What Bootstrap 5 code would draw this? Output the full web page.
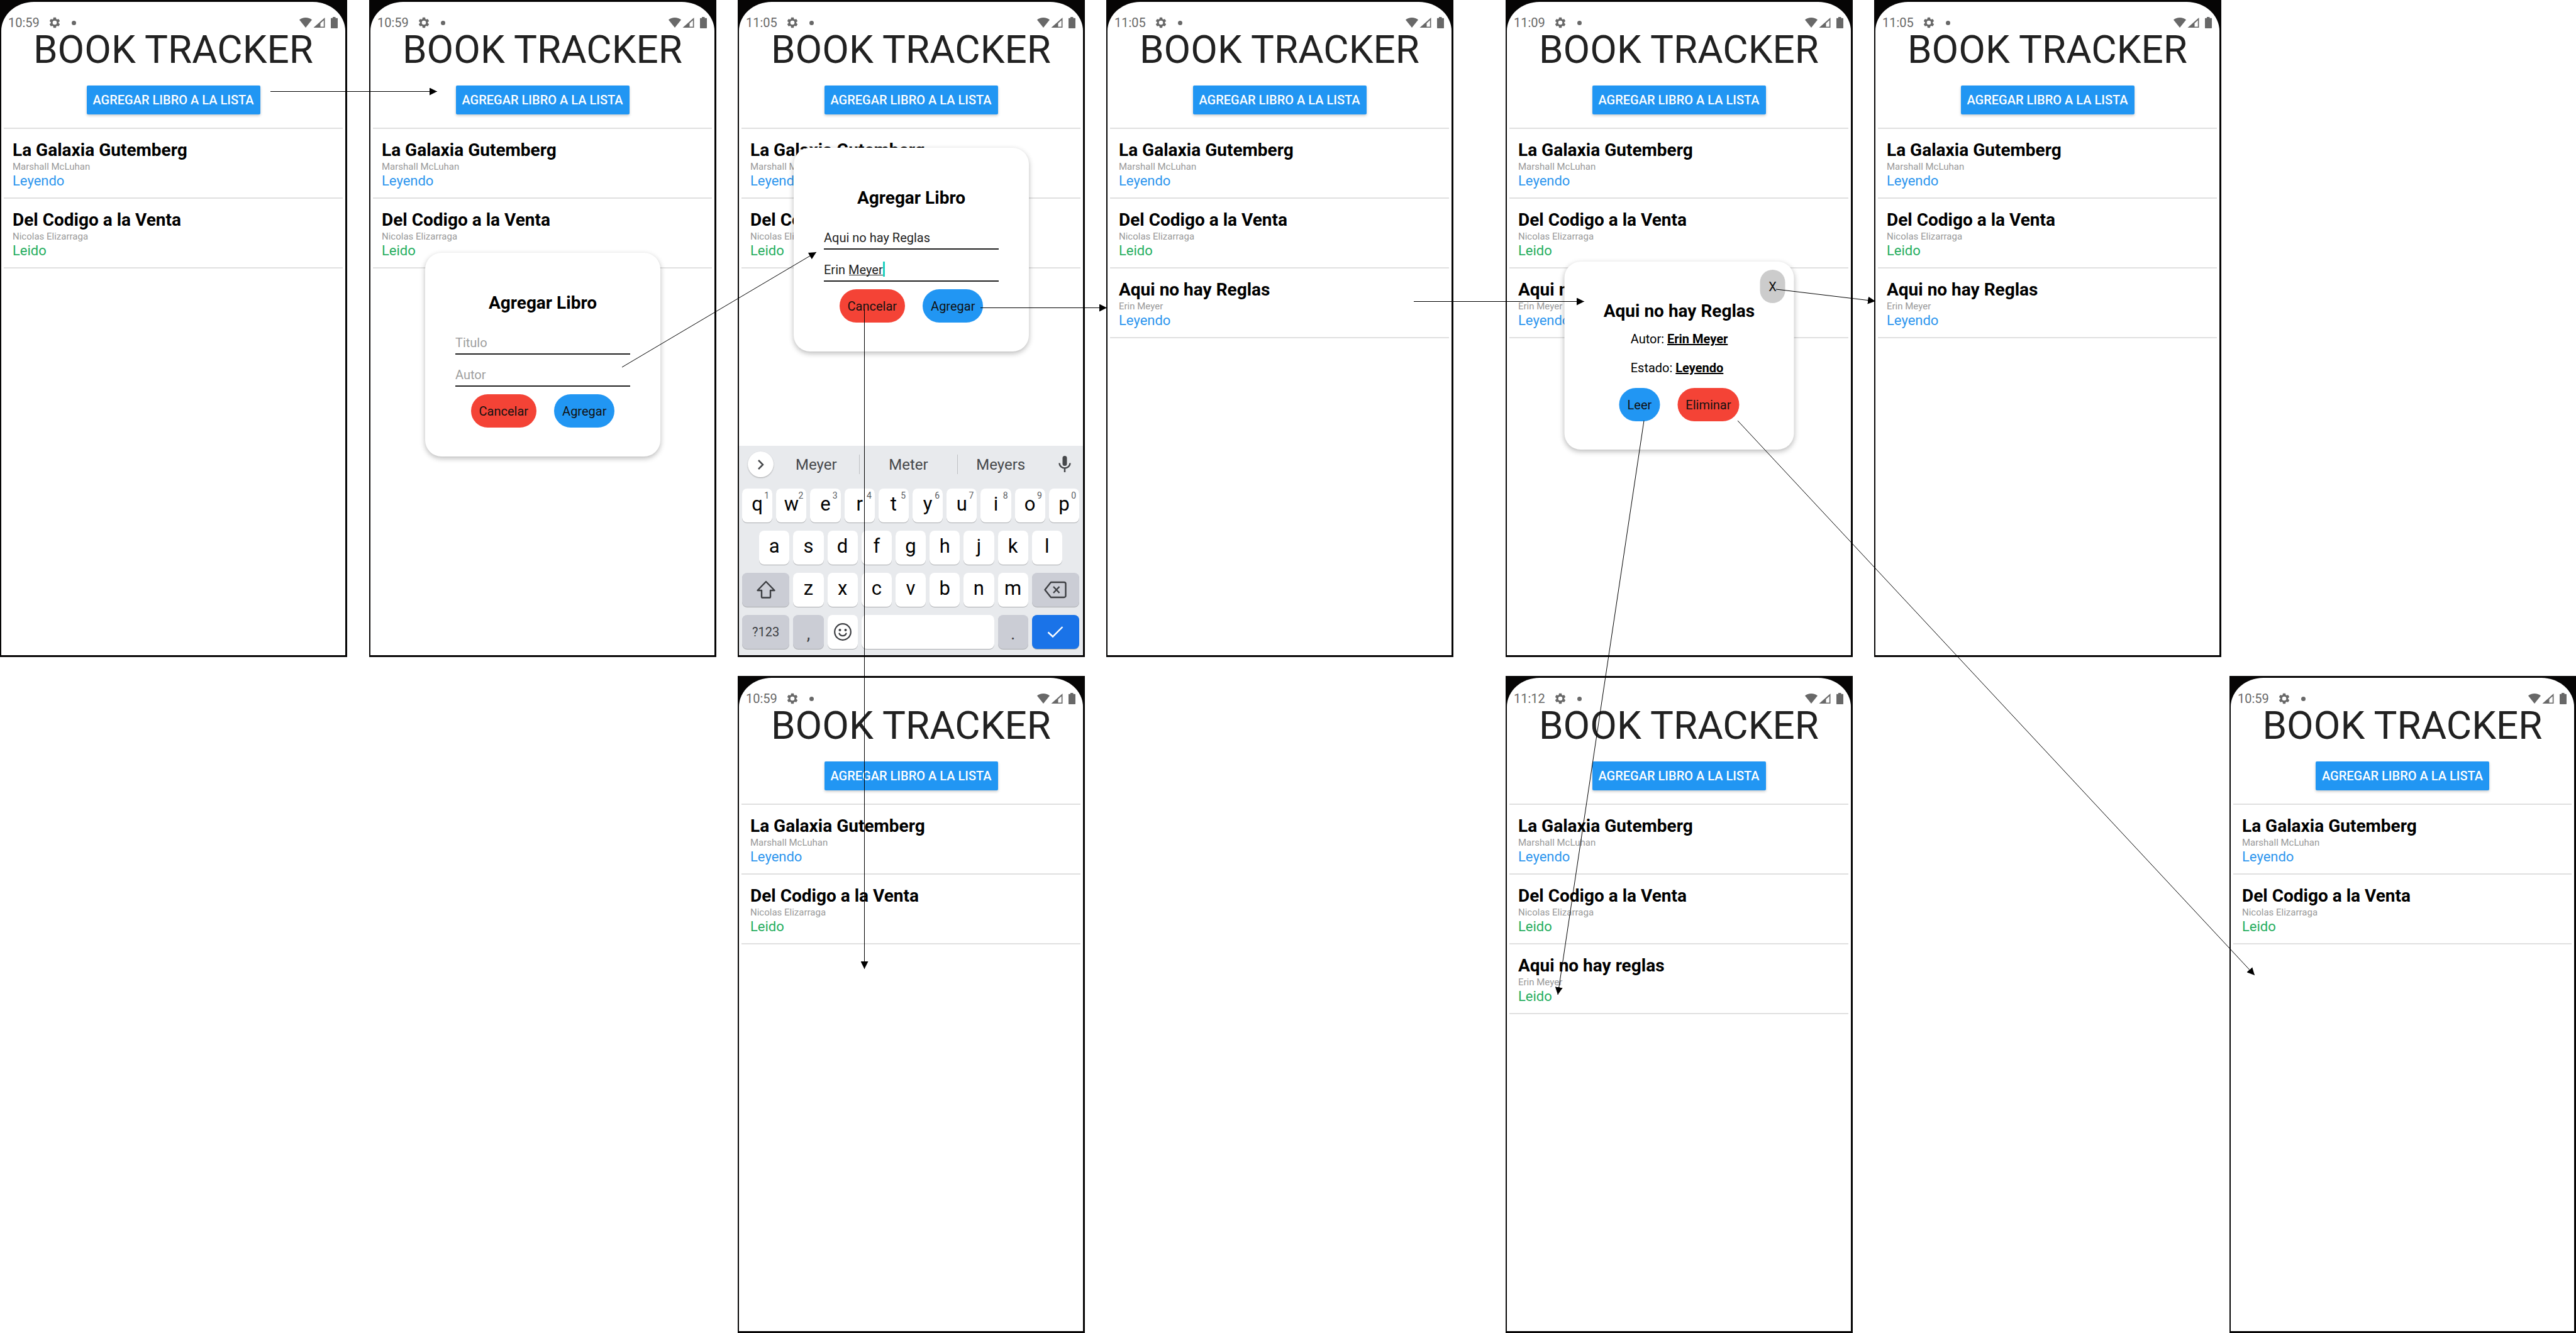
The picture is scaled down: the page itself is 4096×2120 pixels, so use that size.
<!DOCTYPE html>
<html lang="es">
<head>
<meta charset="utf-8">
<meta name="viewport" content="width=device-width, initial-scale=1">
<title>Book Tracker</title>
<link href="https://cdn.jsdelivr.net/npm/bootstrap@5.3.0/dist/css/bootstrap.min.css" rel="stylesheet">
<style>
  body { font-family: Roboto, "Liberation Sans", sans-serif; background: #fff; color: #000; }
  svg { display: block; flex: none; }

  /* board: seven phone columns with connector gutters between them */
  .board {
    display: grid;
    grid-template-columns: 552fr 35fr 552fr 34fr 552fr 34fr 552fr 83fr 552fr 34fr 552fr 13fr 551fr;
    row-gap: 30px;
  }
  .c1 { grid-column: 1; } .c2 { grid-column: 3; } .c3 { grid-column: 5; } .c4 { grid-column: 7; }
  .c5 { grid-column: 9; } .c6 { grid-column: 11; } .c7 { grid-column: 13; }
  .r1 { grid-row: 1; } .r2 { grid-row: 2; }

  .phone { background: #060505; padding: 3px 3px 3px 2px; min-height: 1045px; }
  .screen { background: #fff; border-radius: 52px 52px 0 0 / 46px 46px 0 0; }
  .statusbar { height: 24px; margin-top: 21px; padding: 0 12px 0 11px; color: #686868; font-size: 20px; line-height: 24px; }
  .statusbar .gear { margin-left: 14px; }
  .statusbar .dot { width: 7px; height: 7px; margin-left: 17px; background: #686868; border-radius: 50%; }
  .app-title { font-size: 62px; line-height: 62px; font-weight: 400; color: #212121; }
  .btn-add {
    margin-top: 26px; width: 276px; height: 46px; padding: 0; border: 0; border-radius: 2px;
    background: #2196f3; color: #fff; font-size: 20px; line-height: 24px; font-weight: 500;
    box-shadow: 0 2px 4px rgba(0,0,0,.2); white-space: nowrap;
  }
  .books { margin: 21px 4px 0; border-top: 2px solid #e0e0e0; }
  .book { padding: 18px 14px 14px; border-bottom: 2px solid #e0e0e0; }
  .book h2 { font-size: 28px; line-height: 32px; font-weight: 700; }
  .author { font-size: 15px; line-height: 21px; color: #999; }
  .state { font-size: 22px; line-height: 24px; }
  .reading { color: #2e96ee; }
  .done { color: #27ae60; }

  /* dialogs */
  .dlg { background: #fff; border-radius: 26px; box-shadow: 0 3px 8px rgba(0,0,0,.28); z-index: 2; }
  .dlg h3 { font-size: 28px; line-height: 32px; font-weight: 700; }
  .dlg-add { width: 374px; padding: 64px 48px 46px; }
  .dlg-book { width: 365px; padding: 63px 20px 45px; top: 416px; }
  .at-center { top: 402px; }
  .at-top { top: 235px; }
  .field { width: 100%; height: 36px; padding: 0; border: 0; border-bottom: 2px solid #222; background: none; font-size: 20px; line-height: 24px; color: #222; outline: 0; }
  .field::placeholder { color: #9e9e9e; opacity: 1; }
  .field-1 { margin-top: 30px; }
  .field-2 { margin-top: 15px; }
  .composing { left: 40px; top: 4px; width: 57px; height: 24px; border-right: 3px solid #1fd1c1; pointer-events: none; }
  .composing::after { content: ""; position: absolute; left: 0; right: 0; top: 21px; height: 1px; background: #222; }
  .actions { gap: 28px; }
  .pill { height: 53px; padding: 0 13px; border: 0; border-radius: 27px; font-size: 20px; line-height: 24px; color: #111; }
  .pill-red { background: #f44336; }
  .pill-blue { background: #2196f3; }
  .pill-close { width: 40px; padding: 0; border-radius: 20px; background: #ccc; top: 13px; right: 14px; }
  .facts { font-size: 20px; line-height: 24px; gap: 22px; margin-top: 16px; }

  /* keyboard */
  .keyboard { background: #e8eaed; padding: 0 3px 10px 2px; }
  .suggest { height: 68px; padding: 0 12px 9px; color: #46484b; font-size: 24px; line-height: 28px; }
  .suggest .more { width: 41px; height: 41px; border-radius: 50%; background: #fff; border: 0; box-shadow: 0 1px 2px rgba(0,0,0,.3); }
  .suggest .word { flex: 1 1 0; background: none; border: 0; padding: 0; color: inherit; }
  .suggest .word-mid { flex-grow: 1.15; }
  .suggest .bar { width: 1px; height: 31px; background: #bfc1c5; }
  .keys { display: grid; grid-template-columns: repeat(20, 1fr); row-gap: 13px; }
  .key {
    grid-column: span 2; height: 54px; margin: 0 3px; padding: 0 0 4px; border: 0; border-radius: 8px; background: #fff;
    box-shadow: 0 1px 0 #a9abae; font-size: 31px; line-height: 36px; color: #000; position: relative;
  }
  .key sup { position: absolute; top: 5px; right: 5px; font-size: 14px; line-height: 12px; color: #5a5c5f; }
  .key.indent { grid-column: 2 / span 2; }
  .key.wide { grid-column: span 3; }
  .key.space { grid-column: span 8; }
  .key.grey { background: #cbcdd5; color: #3c3e42; }
  .key.blue { background: #1a73e8; }
  .key.num { font-size: 20px; padding: 0; }
  .key.punct { padding: 6px 0 0; font-size: 28px; }
  .key.icon { padding: 0; display: flex; align-items: center; justify-content: center; }

  .arrows { left: 0; top: 0; width: 100%; height: 100%; z-index: 5; pointer-events: none; }
</style>
<script src="https://cdn.jsdelivr.net/npm/bootstrap@5.3.0/dist/js/bootstrap.bundle.min.js"></script>
</head>
<body>

<svg width="0" height="0" class="position-absolute" aria-hidden="true">
  <symbol id="gear" viewBox="0 0 24 24"><path fill="#686868" fill-rule="evenodd" d="M19.43 12.98c.04-.32.07-.64.07-.98s-.03-.66-.07-.98l2.11-1.65c.19-.15.24-.42.12-.64l-2-3.46c-.12-.22-.39-.3-.61-.22l-2.49 1c-.52-.4-1.08-.73-1.69-.98l-.38-2.65C14.46 2.18 14.25 2 14 2h-4c-.25 0-.46.18-.49.42l-.38 2.65c-.61.25-1.17.59-1.69.98l-2.49-1c-.23-.09-.49 0-.61.22l-2 3.46c-.13.22-.07.49.12.64l2.11 1.65c-.04.32-.07.65-.07.98s.03.66.07.98l-2.11 1.65c-.19.15-.24.42-.12.64l2 3.46c.12.22.39.3.61.22l2.49-1c.52.4 1.08.73 1.69.98l.38 2.65c.03.24.24.42.49.42h4c.25 0 .46-.18.49-.42l.38-2.65c.61-.25 1.17-.59 1.69-.98l2.49 1c.23.09.49 0 .61-.22l2-3.46c.12-.22.07-.49-.12-.64zM12 16a4 4 0 1 1 0-8 4 4 0 0 1 0 8z"/></symbol>
  <symbol id="signals" viewBox="0 0 61 18">
    <path fill="#686868" d="M10 1C6 1 2.500 2.400 0 4.600L10 17 20 4.600C17.500 2.400 14 1 10 1z"/>
    <path fill="#686868" fill-rule="evenodd" d="M40.500 1v16h-18zM38.800 5.200L33.500 10v5.500h5.300z"/>
    <path fill="#686868" d="M53 0h4.500v1.800H60c.6 0 1 .4 1 1V17c0 .6-.4 1-1 1h-9c-.6 0-1-.4-1-1V2.800c0-.6.4-1 1-1h2z"/>
  </symbol>
</svg>

<main class="board position-relative">

  <section class="phone c1 r1 d-flex flex-column position-relative">
    <div class="screen flex-grow-1 d-flex flex-column">
      <div class="statusbar d-flex align-items-center"><span>10:59</span><svg class="gear" width="20" height="20"><use href="#gear"/></svg><span class="dot"></span><svg class="ms-auto" width="61" height="18"><use href="#signals"/></svg></div>
      <h1 class="app-title text-center m-0">BOOK TRACKER</h1>
      <button type="button" class="btn-add align-self-center">AGREGAR LIBRO A LA LISTA</button>
      <div class="books">
        <article class="book"><h2 class="m-0">La Galaxia Gutemberg</h2><div class="author">Marshall McLuhan</div><div class="state reading">Leyendo</div></article>
        <article class="book"><h2 class="m-0">Del Codigo a la Venta</h2><div class="author">Nicolas Elizarraga</div><div class="state done">Leido</div></article>
      </div>
    </div>
  </section>

  <section class="phone c2 r1 d-flex flex-column position-relative">
    <div class="screen flex-grow-1 d-flex flex-column">
      <div class="statusbar d-flex align-items-center"><span>10:59</span><svg class="gear" width="20" height="20"><use href="#gear"/></svg><span class="dot"></span><svg class="ms-auto" width="61" height="18"><use href="#signals"/></svg></div>
      <h1 class="app-title text-center m-0">BOOK TRACKER</h1>
      <button type="button" class="btn-add align-self-center">AGREGAR LIBRO A LA LISTA</button>
      <div class="books">
        <article class="book"><h2 class="m-0">La Galaxia Gutemberg</h2><div class="author">Marshall McLuhan</div><div class="state reading">Leyendo</div></article>
        <article class="book"><h2 class="m-0">Del Codigo a la Venta</h2><div class="author">Nicolas Elizarraga</div><div class="state done">Leido</div></article>
      </div>
    </div>
    <form class="dlg dlg-add at-center position-absolute start-50 translate-middle-x">
      <h3 class="m-0 text-center">Agregar Libro</h3>
      <div class="field-1"><input class="field d-block" type="text" placeholder="Titulo" aria-label="Titulo"></div>
      <div class="field-2"><input class="field d-block" type="text" placeholder="Autor" aria-label="Autor"></div>
      <div class="actions d-flex justify-content-center pt-2 mt-1">
        <button type="button" class="pill pill-red">Cancelar</button>
        <button type="button" class="pill pill-blue">Agregar</button>
      </div>
    </form>
  </section>

  <section class="phone c3 r1 d-flex flex-column position-relative">
    <div class="screen flex-grow-1 d-flex flex-column">
      <div class="statusbar d-flex align-items-center"><span>11:05</span><svg class="gear" width="20" height="20"><use href="#gear"/></svg><span class="dot"></span><svg class="ms-auto" width="61" height="18"><use href="#signals"/></svg></div>
      <h1 class="app-title text-center m-0">BOOK TRACKER</h1>
      <button type="button" class="btn-add align-self-center">AGREGAR LIBRO A LA LISTA</button>
      <div class="books">
        <article class="book"><h2 class="m-0">La Galaxia Gutemberg</h2><div class="author">Marshall McLuhan</div><div class="state reading">Leyendo</div></article>
        <article class="book"><h2 class="m-0">Del Codigo a la Venta</h2><div class="author">Nicolas Elizarraga</div><div class="state done">Leido</div></article>
      </div>
      <div class="keyboard mt-auto">
        <div class="suggest d-flex align-items-center">
          <button type="button" class="more d-flex align-items-center justify-content-center p-0" aria-label="Más"><svg width="12" height="18" viewBox="0 0 12 18"><path d="M2 2l7 7-7 7" fill="none" stroke="#46484b" stroke-width="2.500"/></svg></button>
          <button type="button" class="word">Meyer</button><span class="bar"></span>
          <button type="button" class="word word-mid">Meter</button><span class="bar"></span>
          <button type="button" class="word">Meyers</button>
          <svg class="ms-4 me-1" width="20" height="27" viewBox="0 0 20 27"><rect x="6.500" y="0" width="7" height="16" rx="3.500" fill="#46484b"/><path d="M1.500 11.500a8.500 8 0 0 0 17 0M10 19.500V26" fill="none" stroke="#46484b" stroke-width="2.500"/></svg>
        </div>
        <div class="keys">
          <button type="button" class="key">q<sup>1</sup></button><button type="button" class="key">w<sup>2</sup></button><button type="button" class="key">e<sup>3</sup></button><button type="button" class="key">r<sup>4</sup></button><button type="button" class="key">t<sup>5</sup></button><button type="button" class="key">y<sup>6</sup></button><button type="button" class="key">u<sup>7</sup></button><button type="button" class="key">i<sup>8</sup></button><button type="button" class="key">o<sup>9</sup></button><button type="button" class="key">p<sup>0</sup></button>
          <button type="button" class="key indent">a</button><button type="button" class="key">s</button><button type="button" class="key">d</button><button type="button" class="key">f</button><button type="button" class="key">g</button><button type="button" class="key">h</button><button type="button" class="key">j</button><button type="button" class="key">k</button><button type="button" class="key">l</button>
          <button type="button" class="key wide grey icon" aria-label="Mayúsculas"><svg width="32" height="30" viewBox="0 0 32 30"><path d="M16 2L2.500 16H9v10.500c0 .6.400 1 1 1h12c.6 0 1-.4 1-1V16h6.500z" fill="none" stroke="#3c3e42" stroke-width="2.400" stroke-linejoin="round"/></svg></button><button type="button" class="key">z</button><button type="button" class="key">x</button><button type="button" class="key">c</button><button type="button" class="key">v</button><button type="button" class="key">b</button><button type="button" class="key">n</button><button type="button" class="key">m</button><button type="button" class="key wide grey icon" aria-label="Borrar"><svg width="36" height="28" viewBox="0 0 36 28"><path d="M11 2h21a2.500 2.500 0 0 1 2.500 2.500v19A2.500 2.500 0 0 1 32 26H11L1.500 14z" fill="none" stroke="#3c3e42" stroke-width="2.400" stroke-linejoin="round"/><path d="M15 9l9.500 10M24.500 9L15 19" stroke="#3c3e42" stroke-width="2.400"/></svg></button>
          <button type="button" class="key wide grey num">?123</button><button type="button" class="key grey punct">,</button><button type="button" class="key icon" aria-label="Emoji"><svg width="30" height="30" viewBox="0 0 30 30"><circle cx="15" cy="15" r="12.800" fill="none" stroke="#3c3e42" stroke-width="2.200"/><circle cx="10.500" cy="12" r="2" fill="#3c3e42"/><circle cx="19.500" cy="12" r="2" fill="#3c3e42"/><path d="M9.500 17.500c1 2.500 3 3.700 5.500 3.700s4.500-1.200 5.500-3.700" fill="none" stroke="#3c3e42" stroke-width="2.200" stroke-linecap="round"/></svg></button><button type="button" class="key space" aria-label="Espacio"></button><button type="button" class="key grey punct">.</button><button type="button" class="key wide blue icon" aria-label="Listo"><svg width="26" height="20" viewBox="0 0 26 20"><path d="M1.500 10.500l7.500 7L24.500 2" fill="none" stroke="#fff" stroke-width="2.400"/></svg></button>
        </div>
      </div>
    </div>
    <form class="dlg dlg-add at-top position-absolute start-50 translate-middle-x">
      <h3 class="m-0 text-center">Agregar Libro</h3>
      <div class="field-1"><input class="field d-block" type="text" value="Aqui no hay Reglas" aria-label="Titulo"></div>
      <div class="field-2 position-relative"><input class="field d-block" type="text" value="Erin Meyer" aria-label="Autor"><span class="composing position-absolute"></span></div>
      <div class="actions d-flex justify-content-center pt-2 mt-1">
        <button type="button" class="pill pill-red">Cancelar</button>
        <button type="button" class="pill pill-blue">Agregar</button>
      </div>
    </form>
  </section>

  <section class="phone c4 r1 d-flex flex-column position-relative">
    <div class="screen flex-grow-1 d-flex flex-column">
      <div class="statusbar d-flex align-items-center"><span>11:05</span><svg class="gear" width="20" height="20"><use href="#gear"/></svg><span class="dot"></span><svg class="ms-auto" width="61" height="18"><use href="#signals"/></svg></div>
      <h1 class="app-title text-center m-0">BOOK TRACKER</h1>
      <button type="button" class="btn-add align-self-center">AGREGAR LIBRO A LA LISTA</button>
      <div class="books">
        <article class="book"><h2 class="m-0">La Galaxia Gutemberg</h2><div class="author">Marshall McLuhan</div><div class="state reading">Leyendo</div></article>
        <article class="book"><h2 class="m-0">Del Codigo a la Venta</h2><div class="author">Nicolas Elizarraga</div><div class="state done">Leido</div></article>
        <article class="book"><h2 class="m-0">Aqui no hay Reglas</h2><div class="author">Erin Meyer</div><div class="state reading">Leyendo</div></article>
      </div>
    </div>
  </section>

  <section class="phone c5 r1 d-flex flex-column position-relative">
    <div class="screen flex-grow-1 d-flex flex-column">
      <div class="statusbar d-flex align-items-center"><span>11:09</span><svg class="gear" width="20" height="20"><use href="#gear"/></svg><span class="dot"></span><svg class="ms-auto" width="61" height="18"><use href="#signals"/></svg></div>
      <h1 class="app-title text-center m-0">BOOK TRACKER</h1>
      <button type="button" class="btn-add align-self-center">AGREGAR LIBRO A LA LISTA</button>
      <div class="books">
        <article class="book"><h2 class="m-0">La Galaxia Gutemberg</h2><div class="author">Marshall McLuhan</div><div class="state reading">Leyendo</div></article>
        <article class="book"><h2 class="m-0">Del Codigo a la Venta</h2><div class="author">Nicolas Elizarraga</div><div class="state done">Leido</div></article>
        <article class="book"><h2 class="m-0">Aqui no hay Reglas</h2><div class="author">Erin Meyer</div><div class="state reading">Leyendo</div></article>
      </div>
    </div>
    <div class="dlg dlg-book position-absolute start-50 translate-middle-x d-flex flex-column align-items-center">
      <button type="button" class="pill pill-close position-absolute">X</button>
      <h3 class="m-0 text-center">Aqui no hay Reglas</h3>
      <div class="facts d-flex flex-column align-items-start">
        <div>Autor: <u class="fw-bold">Erin Meyer</u></div>
        <div>Estado: <u class="fw-bold">Leyendo</u></div>
      </div>
      <div class="actions d-flex justify-content-center pt-3 mt-1">
        <button type="button" class="pill pill-blue">Leer</button>
        <button type="button" class="pill pill-red">Eliminar</button>
      </div>
    </div>
  </section>

  <section class="phone c6 r1 d-flex flex-column position-relative">
    <div class="screen flex-grow-1 d-flex flex-column">
      <div class="statusbar d-flex align-items-center"><span>11:05</span><svg class="gear" width="20" height="20"><use href="#gear"/></svg><span class="dot"></span><svg class="ms-auto" width="61" height="18"><use href="#signals"/></svg></div>
      <h1 class="app-title text-center m-0">BOOK TRACKER</h1>
      <button type="button" class="btn-add align-self-center">AGREGAR LIBRO A LA LISTA</button>
      <div class="books">
        <article class="book"><h2 class="m-0">La Galaxia Gutemberg</h2><div class="author">Marshall McLuhan</div><div class="state reading">Leyendo</div></article>
        <article class="book"><h2 class="m-0">Del Codigo a la Venta</h2><div class="author">Nicolas Elizarraga</div><div class="state done">Leido</div></article>
        <article class="book"><h2 class="m-0">Aqui no hay Reglas</h2><div class="author">Erin Meyer</div><div class="state reading">Leyendo</div></article>
      </div>
    </div>
  </section>

  <section class="phone c3 r2 d-flex flex-column position-relative">
    <div class="screen flex-grow-1 d-flex flex-column">
      <div class="statusbar d-flex align-items-center"><span>10:59</span><svg class="gear" width="20" height="20"><use href="#gear"/></svg><span class="dot"></span><svg class="ms-auto" width="61" height="18"><use href="#signals"/></svg></div>
      <h1 class="app-title text-center m-0">BOOK TRACKER</h1>
      <button type="button" class="btn-add align-self-center">AGREGAR LIBRO A LA LISTA</button>
      <div class="books">
        <article class="book"><h2 class="m-0">La Galaxia Gutemberg</h2><div class="author">Marshall McLuhan</div><div class="state reading">Leyendo</div></article>
        <article class="book"><h2 class="m-0">Del Codigo a la Venta</h2><div class="author">Nicolas Elizarraga</div><div class="state done">Leido</div></article>
      </div>
    </div>
  </section>

  <section class="phone c5 r2 d-flex flex-column position-relative">
    <div class="screen flex-grow-1 d-flex flex-column">
      <div class="statusbar d-flex align-items-center"><span>11:12</span><svg class="gear" width="20" height="20"><use href="#gear"/></svg><span class="dot"></span><svg class="ms-auto" width="61" height="18"><use href="#signals"/></svg></div>
      <h1 class="app-title text-center m-0">BOOK TRACKER</h1>
      <button type="button" class="btn-add align-self-center">AGREGAR LIBRO A LA LISTA</button>
      <div class="books">
        <article class="book"><h2 class="m-0">La Galaxia Gutemberg</h2><div class="author">Marshall McLuhan</div><div class="state reading">Leyendo</div></article>
        <article class="book"><h2 class="m-0">Del Codigo a la Venta</h2><div class="author">Nicolas Elizarraga</div><div class="state done">Leido</div></article>
        <article class="book"><h2 class="m-0">Aqui no hay reglas</h2><div class="author">Erin Meyer</div><div class="state done">Leido</div></article>
      </div>
    </div>
  </section>

  <section class="phone c7 r2 d-flex flex-column position-relative">
    <div class="screen flex-grow-1 d-flex flex-column">
      <div class="statusbar d-flex align-items-center"><span>10:59</span><svg class="gear" width="20" height="20"><use href="#gear"/></svg><span class="dot"></span><svg class="ms-auto" width="61" height="18"><use href="#signals"/></svg></div>
      <h1 class="app-title text-center m-0">BOOK TRACKER</h1>
      <button type="button" class="btn-add align-self-center">AGREGAR LIBRO A LA LISTA</button>
      <div class="books">
        <article class="book"><h2 class="m-0">La Galaxia Gutemberg</h2><div class="author">Marshall McLuhan</div><div class="state reading">Leyendo</div></article>
        <article class="book"><h2 class="m-0">Del Codigo a la Venta</h2><div class="author">Nicolas Elizarraga</div><div class="state done">Leido</div></article>
      </div>
    </div>
  </section>

  <!-- navigation flow between screens -->
  <svg class="arrows position-absolute" viewBox="0 0 4096 2120" preserveAspectRatio="none" aria-hidden="true">
    <defs><marker id="tip" markerUnits="userSpaceOnUse" markerWidth="12" markerHeight="12" refX="12" refY="6" orient="auto"><path d="M0 0L12 6 0 12z"/></marker></defs>
    <g stroke="#000" stroke-width="1" fill="none">
      <path marker-end="url(#tip)" d="M430 145.500H695"/>
      <path marker-end="url(#tip)" d="M989 584L1298 401"/>
      <path marker-end="url(#tip)" d="M1559 489.500H1760"/>
      <path marker-end="url(#tip)" d="M1374.500 492V1541"/>
      <path marker-end="url(#tip)" d="M2248 479.500H2519"/>
      <path marker-end="url(#tip)" d="M2824 460L2982 479"/>
      <path marker-end="url(#tip)" d="M2614 669L2477 1582"/>
      <path marker-end="url(#tip)" d="M2763 669L3585 1551"/>
    </g>
  </svg>
</main>
</body>
</html>
